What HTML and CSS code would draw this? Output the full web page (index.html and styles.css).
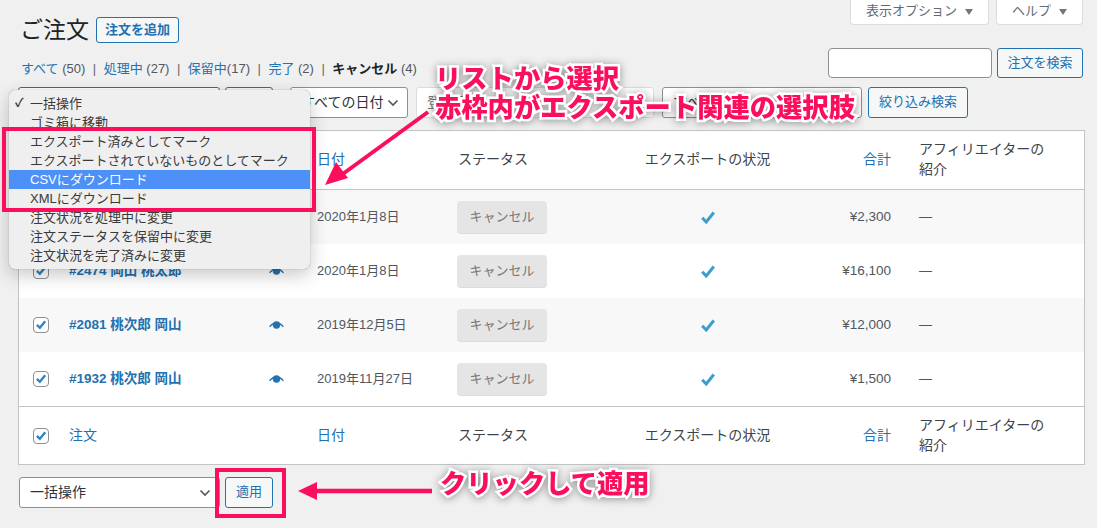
FILE: index.html
```html
<!DOCTYPE html>
<html lang="ja">
<head>
<meta charset="utf-8">
<title>ご注文</title>
<link rel="stylesheet" href="styles.css">
</head>
<body>
<svg class="defs" width="0" height="0">
  <defs>
    <symbol id="chev" viewBox="0 0 12 8"><path d="M1.5 1.5 6 6l4.5-4.5" fill="none" stroke="#50575e" stroke-width="1.6"/></symbol>
    <symbol id="eye" viewBox="0 0 15 9"><path d="M.6 5.800C2.600 3.300 4.800 2 7.500 2s4.900 1.300 6.900 3.800" fill="none" stroke="#2271b1" stroke-width="1.300"/><circle cx="7.500" cy="4" r="3.700" fill="#2271b1"/></symbol>
    <symbol id="tick" viewBox="0 0 14 13"><path d="M1.200 6.800 5.200 11 12.800 1.500" fill="none" stroke="#3a9fcf" stroke-width="3"/></symbol>
    <symbol id="cb" viewBox="0 0 16 16"><path d="M3.300 7.800 6.700 11.200 12.800 3.800" fill="none" stroke="#2b88c4" stroke-width="2.800"/></symbol>
  </defs>
</svg>
<div class="wrap">
  <div class="top-row">
    <div class="title-group">
      <h1 class="title">ご注文</h1>
      <a class="btn btn-add">注文を追加</a>
    </div>
    <div class="screen-meta">
      <span class="tab tab-options">表示オプション<i class="caret"></i></span>
      <span class="tab tab-help">ヘルプ<i class="caret"></i></span>
    </div>
  </div>

  <div class="status-row">
    <ul class="subsub">
      <li><a>すべて</a> (50)</li><li class="sep">|</li>
      <li><a>処理中</a> (27)</li><li class="sep">|</li>
      <li><a>保留中</a>(17)</li><li class="sep">|</li>
      <li><a>完了</a> (2)</li><li class="sep">|</li>
      <li><b>キャンセル</b> (4)</li>
    </ul>
    <div class="search">
      <span class="search-input"></span>
      <a class="btn btn-search">注文を検索</a>
    </div>
  </div>

  <div class="tablenav tablenav-top">
    <span class="select select-bulk select-focus">一括操作</span>
    <a class="btn btn-apply">適用</a>
    <span class="select select-date">すべての日付<svg class="chev"><use href="#chev"/></svg></span>
    <span class="select select-customer">登録顧客</span>
    <span class="select select-type">すべて</span>
    <a class="btn btn-filter">絞り込み検索</a>
  </div>

  <table class="orders">
    <colgroup>
      <col class="c-cb"><col class="c-order"><col class="c-eye"><col class="c-date"><col class="c-status"><col class="c-export"><col class="c-total"><col class="c-aff">
    </colgroup>
    <thead>
      <tr>
        <td class="cb"><span class="check"><svg><use href="#cb"/></svg></span></td>
        <th colspan="2"><a>注文</a></th>
        <th><a>日付</a></th>
        <th>ステータス</th>
        <th class="center">エクスポートの状況</th>
        <th class="right"><a>合計</a></th>
        <th>アフィリエイターの<br>紹介</th>
      </tr>
    </thead>
    <tbody>
      <tr class="alt">
        <td class="cb"><span class="check"><svg><use href="#cb"/></svg></span></td>
        <td class="name"><a>#2475 岡山 桃太郎</a></td>
        <td><svg class="eye"><use href="#eye"/></svg></td>
        <td>2020年1月8日</td>
        <td><span class="mark">キャンセル</span></td>
        <td class="center"><svg class="tick"><use href="#tick"/></svg></td>
        <td class="right">¥2,300</td>
        <td>—</td>
      </tr>
      <tr>
        <td class="cb"><span class="check"><svg><use href="#cb"/></svg></span></td>
        <td class="name"><a>#2474 岡山 桃太郎</a></td>
        <td><svg class="eye"><use href="#eye"/></svg></td>
        <td>2020年1月8日</td>
        <td><span class="mark">キャンセル</span></td>
        <td class="center"><svg class="tick"><use href="#tick"/></svg></td>
        <td class="right">¥16,100</td>
        <td>—</td>
      </tr>
      <tr class="alt">
        <td class="cb"><span class="check"><svg><use href="#cb"/></svg></span></td>
        <td class="name"><a>#2081 桃次郎 岡山</a></td>
        <td><svg class="eye"><use href="#eye"/></svg></td>
        <td>2019年12月5日</td>
        <td><span class="mark">キャンセル</span></td>
        <td class="center"><svg class="tick"><use href="#tick"/></svg></td>
        <td class="right">¥12,000</td>
        <td>—</td>
      </tr>
      <tr>
        <td class="cb"><span class="check"><svg><use href="#cb"/></svg></span></td>
        <td class="name"><a>#1932 桃次郎 岡山</a></td>
        <td><svg class="eye"><use href="#eye"/></svg></td>
        <td>2019年11月27日</td>
        <td><span class="mark">キャンセル</span></td>
        <td class="center"><svg class="tick"><use href="#tick"/></svg></td>
        <td class="right">¥1,500</td>
        <td>—</td>
      </tr>
    </tbody>
    <tfoot>
      <tr>
        <td class="cb"><span class="check"><svg><use href="#cb"/></svg></span></td>
        <th colspan="2"><a>注文</a></th>
        <th><a>日付</a></th>
        <th>ステータス</th>
        <th class="center">エクスポートの状況</th>
        <th class="right"><a>合計</a></th>
        <th>アフィリエイターの<br>紹介</th>
      </tr>
    </tfoot>
  </table>

  <div class="tablenav tablenav-bottom">
    <span class="select select-bulk select-lower">一括操作<svg class="chev"><use href="#chev"/></svg></span>
    <a class="btn btn-apply">適用</a>
  </div>
</div>

<ul class="menu">
  <li class="checked">一括操作</li>
  <li>ゴミ箱に移動</li>
  <li>エクスポート済みとしてマーク</li>
  <li>エクスポートされていないものとしてマーク</li>
  <li class="hl">CSVにダウンロード</li>
  <li>XMLにダウンロード</li>
  <li>注文状況を処理中に変更</li>
  <li>注文ステータスを保留中に変更</li>
  <li>注文状況を完了済みに変更</li>
</ul>

<span class="frame frame-menu"></span>
<span class="frame frame-apply"></span>

<svg class="arrows" width="1097" height="528" viewBox="0 0 1097 528">
  <path d="M428 112 340 176" stroke="#fb0e5c" stroke-width="4" fill="none"/>
  <path d="M325 185 348 178 336 162Z" fill="#fb0e5c"/>
  <path d="M312 491H432" stroke="#fb0e5c" stroke-width="4.500" fill="none"/>
  <path d="M298 491 317 482V500Z" fill="#fb0e5c"/>
</svg>

<p class="note note-list">リストから選択<br>赤枠内がエクスポート関連の選択肢</p>
<p class="note note-apply">クリックして適用</p>
</body>
</html>
```
FILE: styles.css
```css
* { box-sizing: border-box; }
html, body { margin: 0; padding: 0; }
body {
  position: relative;
  width: 1097px;
  height: 528px;
  overflow: hidden;
  background: #f0f0f1;
  color: #3c434a;
  font: 13px/1.4 "Liberation Sans", "Noto Sans CJK JP", sans-serif;
}
.defs { position: absolute; }
a { color: #2271b1; text-decoration: none; }
.wrap { padding: 0 14px 0 18px; }

.top-row { display: flex; justify-content: space-between; align-items: flex-start; height: 43px; }
.title-group { display: flex; align-items: center; gap: 7px; padding-top: 15px; padding-left: 2px; }
.title { margin: 0; font-size: 23px; font-weight: 400; line-height: 30px; color: #1d2327; }
.screen-meta { display: flex; gap: 7px; margin-top: -1px; }
.tab {
  display: flex; align-items: center; justify-content: center; gap: 8px;
  height: 26px; background: #fff; border: 1px solid #dcdcde; border-top: 0; border-radius: 0 0 4px 4px;
  color: #646970; font-size: 13px;
}
.tab-options { width: 139px; }
.tab-help { width: 87px; }
.caret { width: 0; height: 0; border-style: solid; border-width: 6px 4px 0; border-color: #72777c transparent transparent; }

.btn {
  display: inline-flex; align-items: center; justify-content: center;
  border: 1px solid #2271b1; border-radius: 3px; background: #f6f7f7; color: #2271b1; font-size: 13px;
}
.btn-add { width: 83px; height: 26px; font-weight: 700; font-size: 13px; }

.status-row { display: flex; justify-content: space-between; align-items: flex-end; height: 30px; margin-top: 5px; }
.subsub { display: flex; margin: 0; padding: 0 0 0 3px; list-style: none; color: #50575e; font-size: 13px; line-height: 18px; }
.subsub .sep { margin: 0 7.500px; color: #646970; }
.subsub b { color: #1d2327; }
.search { display: flex; gap: 5px; }
.search-input { width: 164px; height: 30px; background: #fff; border: 1px solid #8c8f94; border-radius: 4px; }
.btn-search { width: 86px; height: 30px; }

.tablenav { display: flex; height: 31px; }
.tablenav-top { margin-top: 9px; }
.tablenav-bottom { margin-top: 12px; }
.select {
  display: flex; align-items: center; justify-content: space-between;
  height: 31px; padding: 0 8px 0 10px; background: #fff; border: 1px solid #8c8f94; border-radius: 3px;
  font-size: 14px; color: #2c3338; white-space: nowrap; overflow: hidden;
}
.select-bulk { width: 202px; }
.select-lower { width: 201px; margin-left: 1px; }
.select-focus { border-color: #2271b1; }
.btn-apply { width: 48px; height: 31px; margin-left: 5px; font-size: 13px; }
.select-date { width: 118px; margin-left: 17px; }
.select-customer { width: 238px; margin-left: 8px; border-color: #dcdcde; color: #757575; }
.select-type { width: 200px; margin-left: 8px; }
.btn-filter { width: 100px; height: 31px; margin-left: 6px; }
.chev { width: 12px; height: 8px; flex: none; }

.orders {
  width: 1065px; margin-top: 12px; table-layout: fixed; border-collapse: separate; border-spacing: 0;
  background: #fff; border: 1px solid #c3c4c7;
}
.c-cb { width: 40px; } .c-order { width: 200px; } .c-eye { width: 48px; } .c-date { width: 141px; }
.c-status { width: 187px; } .c-export { width: 145px; } .c-total { width: 129px; } .c-aff { width: 175px; }
.orders th { font-weight: 400; text-align: left; font-size: 14px; }
.orders th, .orders td { padding: 0 10px; vertical-align: middle; }
.orders td { font-size: 13px; }
thead tr { height: 59px; }
thead th, thead td { border-bottom: 1px solid #c3c4c7; }
tfoot tr { height: 58px; }
tfoot th, tfoot td { border-top: 1px solid #c3c4c7; }
tbody tr { height: 54px; }
tbody td { color: #50575e; }
.alt td { background: #f8f8f8; }
.orders .cb { padding: 0 0 0 14px; }
.orders .name { font-size: 13.500px; font-weight: 700; }
.orders .center { text-align: center; }
.orders th.center { padding: 0; white-space: nowrap; }
.orders .right { text-align: right; padding-right: 18px; }
.orders tbody .right { font-size: 13.500px; }
.check { display: block; width: 16px; height: 16px; background: #fff; border: 1px solid #8c8f94; border-radius: 4px; }
.check svg { display: block; width: 14px; height: 14px; }
.eye { display: block; width: 15px; height: 9px; }
.tick { display: inline-block; width: 14px; height: 13px; vertical-align: middle; }
.mark {
  display: block; width: 90px; height: 33px; margin-left: -1px; line-height: 31px; text-align: center;
  background: #e5e5e5; border-radius: 4px; border-bottom: 1px solid #dcdcdc; color: #777;
}

.menu {
  position: absolute; left: 9px; top: 90px; width: 301px; height: 179px; margin: 0; padding: 4px 0;
  list-style: none; background: #efefef; border-radius: 6px; box-shadow: 0 0 1px rgba(0,0,0,.45), 0 6px 18px rgba(0,0,0,.22);
  color: #3a3a3a; font-size: 13px;
}
.menu li { height: 19px; line-height: 19px; padding-left: 21px; white-space: nowrap; }
.menu .hl { background: #4d90f7; color: #fff; }
.menu .checked { position: relative; }
.menu .checked::before { content: "✓"; position: absolute; left: 6px; font-size: 12px; font-weight: 700; }

.frame { position: absolute; border: 4px solid #fb0e5c; }
.frame-menu { left: 2px; top: 127px; width: 314px; height: 85px; }
.frame-apply { left: 215px; top: 468px; width: 71px; height: 50px; }
.arrows { position: absolute; left: 0; top: 0; }

.note {
  position: absolute; margin: 0; color: #fb0e5c; font-size: 26.300px; font-weight: 900; line-height: 29px; white-space: nowrap;
  font-family: "Noto Sans CJK JP", sans-serif;
  -webkit-text-stroke: 5px #fff; paint-order: stroke fill;
  filter: drop-shadow(0 1px 4px rgba(0,0,0,.4));
}
.note-list { left: 435px; top: 62px; }
.note-apply { left: 440px; top: 467px; }
```
